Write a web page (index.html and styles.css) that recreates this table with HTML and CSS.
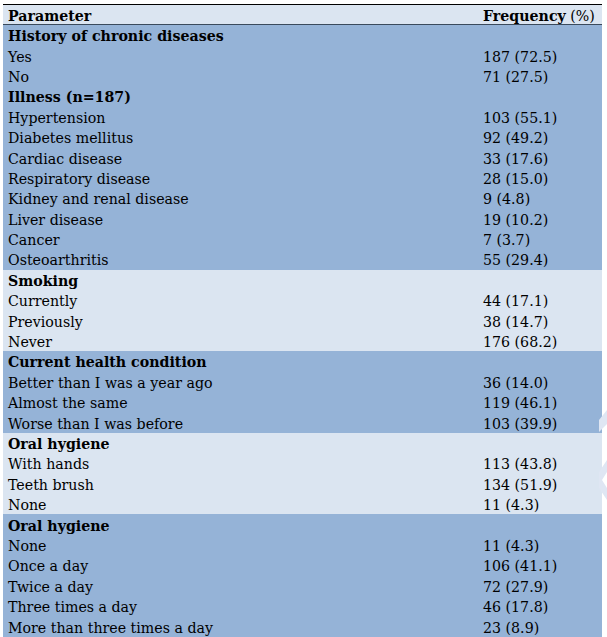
FILE: index.html
```html
<!DOCTYPE html>
<html>
<head>
<meta charset="utf-8">
<link rel="stylesheet" href="styles.css">
</head>
<body>
<div class="page">
  <div class="table">
    <div class="row head"><span class="c1 b">Parameter</span><span class="c2"><b>Frequency</b> (%)</span></div>
    <div class="group mid">
      <div class="row"><span class="c1 b">History of chronic diseases</span><span class="c2"></span></div>
      <div class="row"><span class="c1">Yes</span><span class="c2">187 (72.5)</span></div>
      <div class="row"><span class="c1">No</span><span class="c2">71 (27.5)</span></div>
      <div class="row"><span class="c1 b">Illness (n=187)</span><span class="c2"></span></div>
      <div class="row"><span class="c1">Hypertension</span><span class="c2">103 (55.1)</span></div>
      <div class="row"><span class="c1">Diabetes mellitus</span><span class="c2">92 (49.2)</span></div>
      <div class="row"><span class="c1">Cardiac disease</span><span class="c2">33 (17.6)</span></div>
      <div class="row"><span class="c1">Respiratory disease</span><span class="c2">28 (15.0)</span></div>
      <div class="row"><span class="c1">Kidney and renal disease</span><span class="c2">9 (4.8)</span></div>
      <div class="row"><span class="c1">Liver disease</span><span class="c2">19 (10.2)</span></div>
      <div class="row"><span class="c1">Cancer</span><span class="c2">7 (3.7)</span></div>
      <div class="row"><span class="c1">Osteoarthritis</span><span class="c2">55 (29.4)</span></div>
    </div>
    <div class="group light">
      <div class="row"><span class="c1 b">Smoking</span><span class="c2"></span></div>
      <div class="row"><span class="c1">Currently</span><span class="c2">44 (17.1)</span></div>
      <div class="row"><span class="c1">Previously</span><span class="c2">38 (14.7)</span></div>
      <div class="row"><span class="c1">Never</span><span class="c2">176 (68.2)</span></div>
    </div>
    <div class="group mid">
      <div class="row"><span class="c1 b">Current health condition</span><span class="c2"></span></div>
      <div class="row"><span class="c1">Better than I was a year ago</span><span class="c2">36 (14.0)</span></div>
      <div class="row"><span class="c1">Almost the same</span><span class="c2">119 (46.1)</span></div>
      <div class="row"><span class="c1">Worse than I was before</span><span class="c2">103 (39.9)</span></div>
    </div>
    <div class="group light">
      <div class="row"><span class="c1 b">Oral hygiene</span><span class="c2"></span></div>
      <div class="row"><span class="c1">With hands</span><span class="c2">113 (43.8)</span></div>
      <div class="row"><span class="c1">Teeth brush</span><span class="c2">134 (51.9)</span></div>
      <div class="row"><span class="c1">None</span><span class="c2">11 (4.3)</span></div>
    </div>
    <div class="group mid">
      <div class="row"><span class="c1 b">Oral hygiene</span><span class="c2"></span></div>
      <div class="row"><span class="c1">None</span><span class="c2">11 (4.3)</span></div>
      <div class="row"><span class="c1">Once a day</span><span class="c2">106 (41.1)</span></div>
      <div class="row"><span class="c1">Twice a day</span><span class="c2">72 (27.9)</span></div>
      <div class="row"><span class="c1">Three times a day</span><span class="c2">46 (17.8)</span></div>
      <div class="row"><span class="c1">More than three times a day</span><span class="c2">23 (8.9)</span></div>
    </div>
  </div>
  <svg class="watermark" width="8" height="120" viewBox="0 0 8 120">
    <polygon points="8,0 8,14 0,22 0,10" fill="#dfe6f3"/>
    <polygon points="8,50 8,62 3,70 8,78 8,90 0,78 0,62" fill="#dfe6f3"/>
  </svg>
</div>
</body>
</html>
```

FILE: styles.css
```css
html, body {
  margin: 0;
  padding: 0;
  background: #ffffff;
}
.page {
  position: relative;
  width: 607px;
  height: 637px;
  padding: 4px 5px 0 3px;
  box-sizing: border-box;
  font-family: "DejaVu Serif", "Liberation Serif", serif;
  font-size: 14.2px;
  color: #000000;
  overflow: hidden;
}
.table {
  display: flex;
  flex-direction: column;
  width: 599px;
  border-top: 1.5px solid #000000;
}
.row {
  display: flex;
  align-items: center;
  height: 20.4px;
  padding-top: 2px;
  box-sizing: border-box;
  line-height: 18px;
  white-space: nowrap;
}
.c1 {
  flex: 0 0 480px;
  padding-left: 5px;
  box-sizing: border-box;
}
.c2 {
  flex: 1;
}
.b, .c2 b {
  font-weight: bold;
}
.head {
  background: #dbe5f1;
  height: 20px;
  border-bottom: 1px solid #3a4a5c;
}
.mid {
  background: #95b3d7;
}
.light {
  background: #dbe5f1;
}
.watermark {
  position: absolute;
  right: 0;
  top: 410px;
}
```
